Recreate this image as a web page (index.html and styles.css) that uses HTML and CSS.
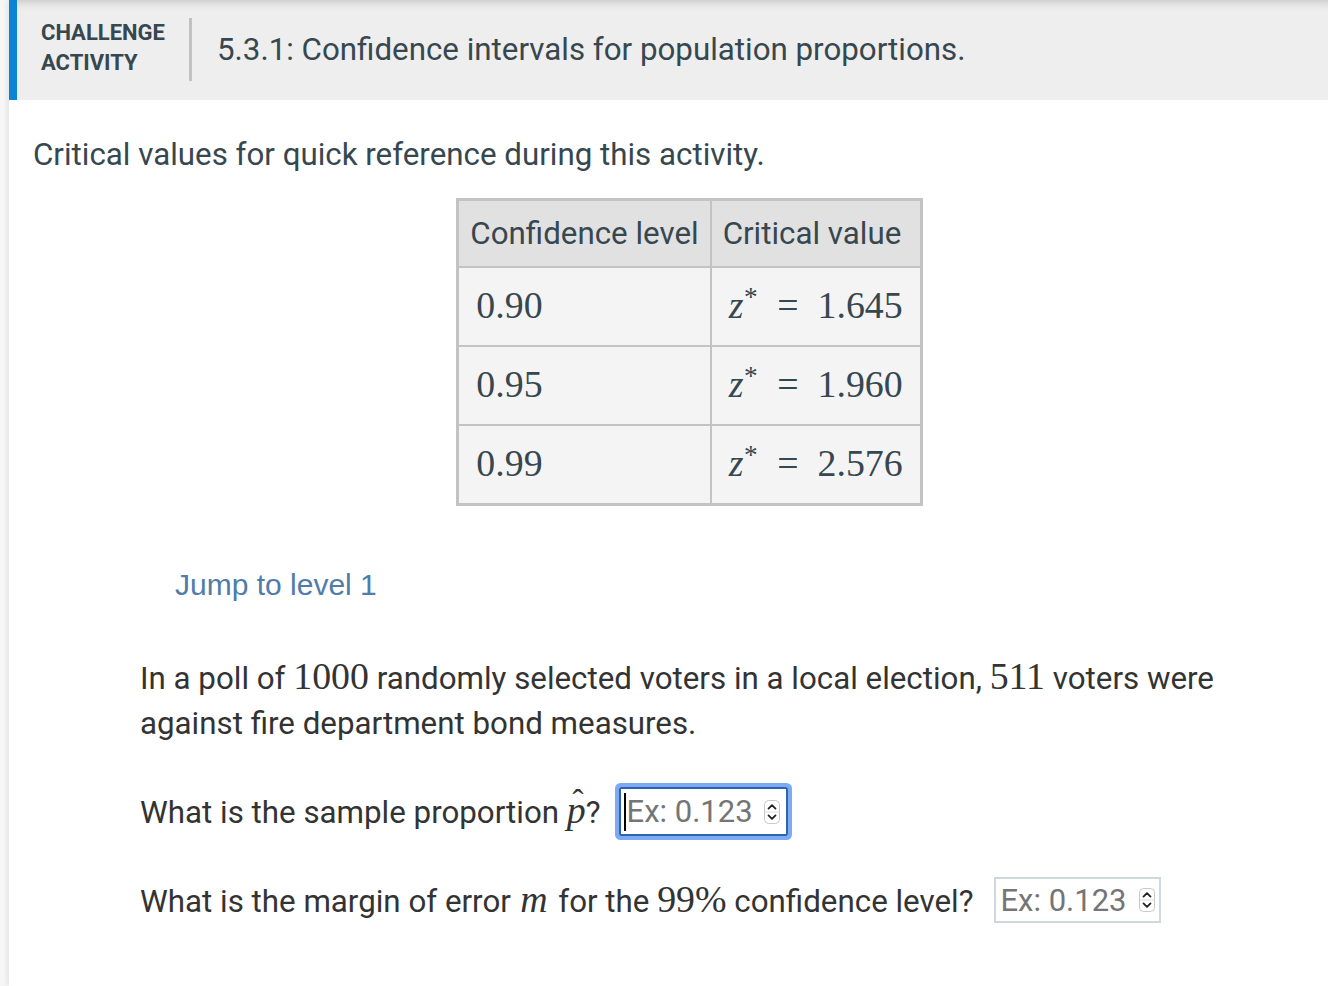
FILE: index.html
```html
<!DOCTYPE html>
<html lang="en">
<head>
<meta charset="utf-8">
<title>Challenge activity 5.3.1</title>
<link rel="stylesheet" href="styles.css">
</head>
<body>
<div class="page">
  <header class="activity-header">
    <div class="label">CHALLENGE<br>ACTIVITY</div>
    <div class="divider"></div>
    <h1 class="title">5.3.1: Confidence intervals for population proportions.</h1>
  </header>

  <p class="intro">Critical values for quick reference during this activity.</p>

  <div class="table-wrap">
    <table class="crit">
      <thead>
        <tr><th>Confidence level</th><th>Critical value</th></tr>
      </thead>
      <tbody>
        <tr><td><span class="m">0.90</span></td><td><span class="m"><i>z</i><sup>*</sup><span class="eq">=</span>1.645</span></td></tr>
        <tr><td><span class="m">0.95</span></td><td><span class="m"><i>z</i><sup>*</sup><span class="eq">=</span>1.960</span></td></tr>
        <tr><td><span class="m">0.99</span></td><td><span class="m"><i>z</i><sup>*</sup><span class="eq">=</span>2.576</span></td></tr>
      </tbody>
    </table>
  </div>

  <a class="jump">Jump to level 1</a>

  <div class="question">
    <p class="stem">In a poll of <span class="m">1000</span> randomly selected voters in a local election, <span class="m">511</span> voters were against fire department bond measures.</p>

    <div class="ask">
      <span>What is the sample proportion <span class="m"><i class="phat">p</i></span>?</span>
      <div class="answer focused">
        <span class="caret"></span>
        <span class="ph">Ex: 0.123</span>
        <svg class="spin" viewBox="0 0 16 24" width="16" height="24"><rect x="0.5" y="0.5" width="15" height="23" rx="4" fill="#fff" stroke="#c8c8c8"/><line x1="1" y1="12" x2="15" y2="12" stroke="#ddd"/><path d="M4.5 8.6 L8 5.2 L11.5 8.6" fill="none" stroke="#222" stroke-width="1.8" stroke-linecap="round" stroke-linejoin="round"/><path d="M4.5 15.4 L8 18.8 L11.5 15.4" fill="none" stroke="#222" stroke-width="1.8" stroke-linecap="round" stroke-linejoin="round"/></svg>
      </div>
    </div>

    <div class="ask ask2">
      <span>What is the margin of error <span class="m"><i class="mi">m</i></span> for the <span class="m">99%</span> confidence level?</span>
      <div class="answer">
        <span class="ph">Ex: 0.123</span>
        <svg class="spin" viewBox="0 0 16 24" width="16" height="24"><rect x="0.5" y="0.5" width="15" height="23" rx="4" fill="#fff" stroke="#c8c8c8"/><line x1="1" y1="12" x2="15" y2="12" stroke="#ddd"/><path d="M4.5 8.6 L8 5.2 L11.5 8.6" fill="none" stroke="#222" stroke-width="1.8" stroke-linecap="round" stroke-linejoin="round"/><path d="M4.5 15.4 L8 18.8 L11.5 15.4" fill="none" stroke="#222" stroke-width="1.8" stroke-linecap="round" stroke-linejoin="round"/></svg>
      </div>
    </div>
  </div>
</div>
</body>
</html>
```

FILE: styles.css
```css
html, body {
  margin: 0;
  padding: 0;
}
body {
  background: #f6f6f6;
  font-family: Roboto, "Liberation Sans", sans-serif;
  color: #333;
}
.page {
  margin-left: 9px;
  min-height: 986px;
  background: #fff;
  box-shadow: -3px 0 4px rgba(0,0,0,0.06);
}
.activity-header {
  height: 100px;
  box-sizing: border-box;
  background: #eeeeee;
  border-left: 8px solid #0b85d3;
  box-shadow: inset 0 10px 10px -8px rgba(0,0,0,0.18);
  display: flex;
  align-items: center;
  padding-left: 24px;
}
.label {
  font-weight: 700;
  font-size: 22px;
  line-height: 30px;
  color: #37474f;
  position: relative;
  top: -2px;
}
.divider {
  width: 3px;
  height: 63px;
  background: #c2c2c2;
  margin: 0 25px 0 24px;
  position: relative;
  top: -1px;
}
.title {
  margin: 0;
  font-weight: 400;
  font-size: 31.3px;
  color: #37474f;
  position: relative;
  top: -1px;
}
.intro {
  margin: 36px 0 0 24px;
  font-size: 31.3px;
  line-height: 38px;
  color: #37474f;
}
.m {
  font-family: "Liberation Serif", "DejaVu Serif", serif;
  font-size: 1.21em;
  line-height: 1;
}
.m i { font-style: italic; }
.m sup { font-size: 0.72em; vertical-align: 0.45em; line-height: 0; margin-left: 0.02em; }
.eq { margin: 0 0.5em 0 0.52em; }
.mi { padding: 0 0.08em 0 0.04em; }
.table-wrap {
  display: flex;
  justify-content: center;
  padding-left: 42px;
  margin-top: 24px;
}
.crit {
  border-collapse: collapse;
  border: 3px solid #c3c3c3;
  color: #37474f;
}
.crit th {
  background: #e1e1e1;
  font-weight: 400;
  font-size: 31.3px;
  height: 65px;
  padding: 0 11px 0 11px;
  text-align: left;
  border: 2px solid #c3c3c3;
}
.crit td {
  background: #f4f4f4;
  height: 77px;
  padding: 0 17px 0 17px;
  border: 2px solid #c3c3c3;
  font-size: 31.3px;
}
.jump {
  display: block;
  margin: 62px 0 0 166px;
  font-family: "Liberation Sans", Arial, sans-serif;
  font-size: 30px;
  color: #4f7ca8;
}
.question {
  padding-left: 131px;
  margin-top: 54px;
}
.stem {
  margin: 0;
  font-size: 31.3px;
  line-height: 45px;
  max-width: 1100px;
  color: #333;
}
.ask {
  display: flex;
  align-items: center;
  font-size: 31.3px;
  margin-top: 41px;
  gap: 12px;
}
.ask2 { margin-top: 41px; gap: 21px; }
.phat { position: relative; }
.phat::before {
  content: "\02C6";
  position: absolute;
  left: 0.16em;
  top: -0.12em;
  font-style: normal;
  font-size: 0.9em;
}
.answer {
  display: flex;
  align-items: center;
  border: 2px solid #cfd8dc;
  height: 42px;
  padding: 0 4px 0 4px;
  gap: 12px;
  box-sizing: content-box;
}
.answer .ph {
  color: #757575;
  font-size: 31px;
  line-height: 1;
}
.answer.focused {
  border: 2px solid #2e63b0;
  box-shadow: 0 0 0 4px #7eaaf3;
  border-radius: 2px;
  height: 45px;
  padding: 0 6px 0 3px;
  gap: 0;
  margin-left: 6px;
}
.caret {
  width: 2px;
  height: 38px;
  background: #000;
  margin-right: 1px;
}
.answer.focused .spin { margin-left: 11px; }
.spin { flex: none; }
```
